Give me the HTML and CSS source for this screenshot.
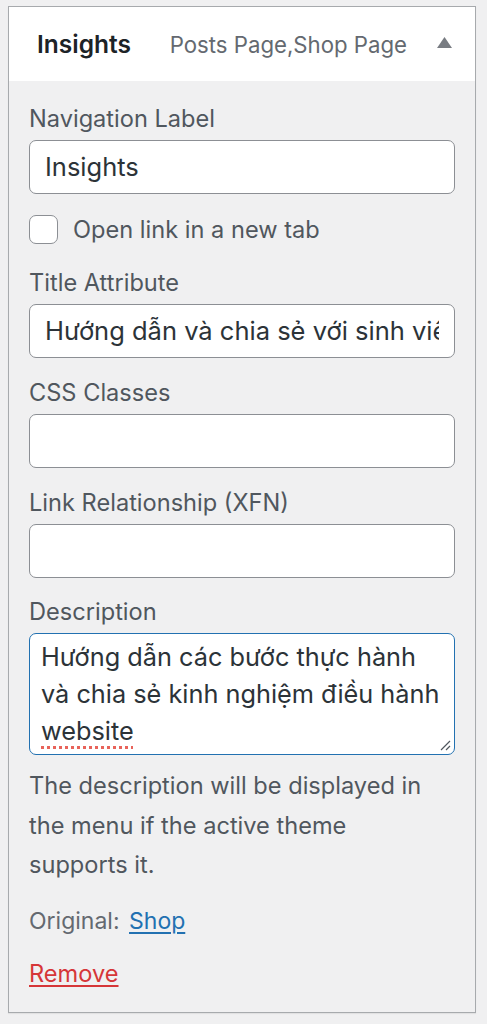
FILE: index.html
```html
<!DOCTYPE html>
<html lang="vi">
<head>
<meta charset="utf-8">
<title>Menu item settings</title>
<link rel="stylesheet" href="styles.css">
</head>
<body>
<div class="menu-item">
  <div class="item-bar">
    <span class="item-title">Insights</span>
    <span class="item-controls">
      <span class="item-type">Posts Page,Shop Page</span>
      <svg class="toggle" width="15" height="11" viewBox="0 0 15 11"><polygon points="7.5,0 15,11 0,11" fill="#787c82"/></svg>
    </span>
  </div>
  <div class="item-settings">
    <div class="field">
      <label class="field-label">Navigation Label</label>
      <div class="text-input"><span class="value">Insights</span></div>
    </div>
    <div class="check-row">
      <span class="checkbox"></span>
      <span class="check-label">Open link in a new tab</span>
    </div>
    <div class="field">
      <label class="field-label">Title Attribute</label>
      <div class="text-input"><span class="value">Hướng dẫn và chia sẻ với sinh viên</span></div>
    </div>
    <div class="field">
      <label class="field-label">CSS Classes</label>
      <div class="text-input"><span class="value"></span></div>
    </div>
    <div class="field">
      <label class="field-label">Link Relationship (XFN)</label>
      <div class="text-input"><span class="value"></span></div>
    </div>
    <div class="field">
      <label class="field-label">Description</label>
      <div class="textarea">Hướng dẫn các bước thực hành<br>và chia sẻ kinh nghiệm điều hành<br><span class="misspelled">website</span>
        <svg class="grip" width="12" height="12" viewBox="0 0 12 12"><path d="M11 2 L2 11 M11 7 L7 11" stroke="#50575e" stroke-width="1.2" fill="none"/></svg>
      </div>
      <p class="help">The description will be displayed in<br>the menu if the active theme<br>supports it.</p>
    </div>
    <p class="original">Original: <a class="link" href="#">Shop</a></p>
    <p class="actions"><a class="remove" href="#">Remove</a></p>
  </div>
</div>
</body>
</html>
```

FILE: styles.css
```css
* { box-sizing: border-box; }
html, body { margin: 0; padding: 0; }
body {
  background: #f0f0f1;
  font-family: Inter, "Noto Sans", sans-serif;
  color: #50575e;
  padding: 6px 11px 12px 8px;
}
.menu-item {
  border: 1px solid #a7aaad;
  background: #f0f0f1;
  box-shadow: 0 1px 1px rgba(0,0,0,0.06);
}
.item-bar {
  background: #fff;
  height: 74px;
  display: flex;
  align-items: center;
  justify-content: space-between;
  padding: 0 23px 0 28px;
}
.item-title {
  font-weight: 600;
  font-size: 24.5px;
  color: #1d2327;
}
.item-controls {
  display: flex;
  align-items: center;
  gap: 30px;
}
.item-type {
  font-size: 22.2px;
  color: #646970;
}
.toggle { display: block; margin-top: -3px; }
.item-settings {
  padding: 20px 20px 0 20px;
}
.field-label {
  display: block;
  font-size: 23.6px;
  line-height: 36px;
  color: #50575e;
}
.text-input {
  margin-top: 3px;
  height: 54px;
  background: #fff;
  border: 1px solid #8c8f94;
  border-radius: 7px;
  font-size: 25.5px;
  line-height: 52px;
  color: #2c3338;
  padding: 0 15px;
}
.value {
  display: block;
  white-space: nowrap;
  overflow: hidden;
  height: 52px;
}
.field + .field { margin-top: 17px; }
.field:last-of-type { margin-top: 16px; }
.check-row {
  display: flex;
  align-items: center;
  margin: 21px 0 22px;
  height: 28px;
}
.checkbox {
  width: 29px;
  height: 29px;
  background: #fff;
  border: 1px solid #8c8f94;
  border-radius: 7px;
  margin-right: 15px;
}
.check-label {
  font-size: 23.6px;
  color: #50575e;
}
.textarea {
  position: relative;
  margin-top: 3px;
  height: 122px;
  background: #fff;
  border: 1px solid #2271b1;
  border-radius: 7px;
  font-size: 25.3px;
  line-height: 37px;
  color: #2c3338;
  padding: 4px 11px;
  white-space: nowrap;
}
.misspelled {
  text-decoration: underline dotted #e8635a;
  text-decoration-thickness: 3px;
  text-underline-offset: 6px;
}
.grip {
  position: absolute;
  right: 3px;
  bottom: 3px;
}
.help {
  margin: 11px 0 0;
  font-size: 23.6px;
  line-height: 39.5px;
  color: #50575e;
}
.original {
  margin: 18px 0 0;
  font-size: 23px;
  line-height: 36px;
  color: #646970;
}
.link {
  color: #2271b1;
  margin-left: 3px;
  text-underline-offset: 3px;
}
.actions {
  margin: 17px 0 0;
  font-size: 23.6px;
  line-height: 36px;
  padding-bottom: 20px;
}
.remove {
  color: #d63638;
  text-underline-offset: 3px;
}
```
